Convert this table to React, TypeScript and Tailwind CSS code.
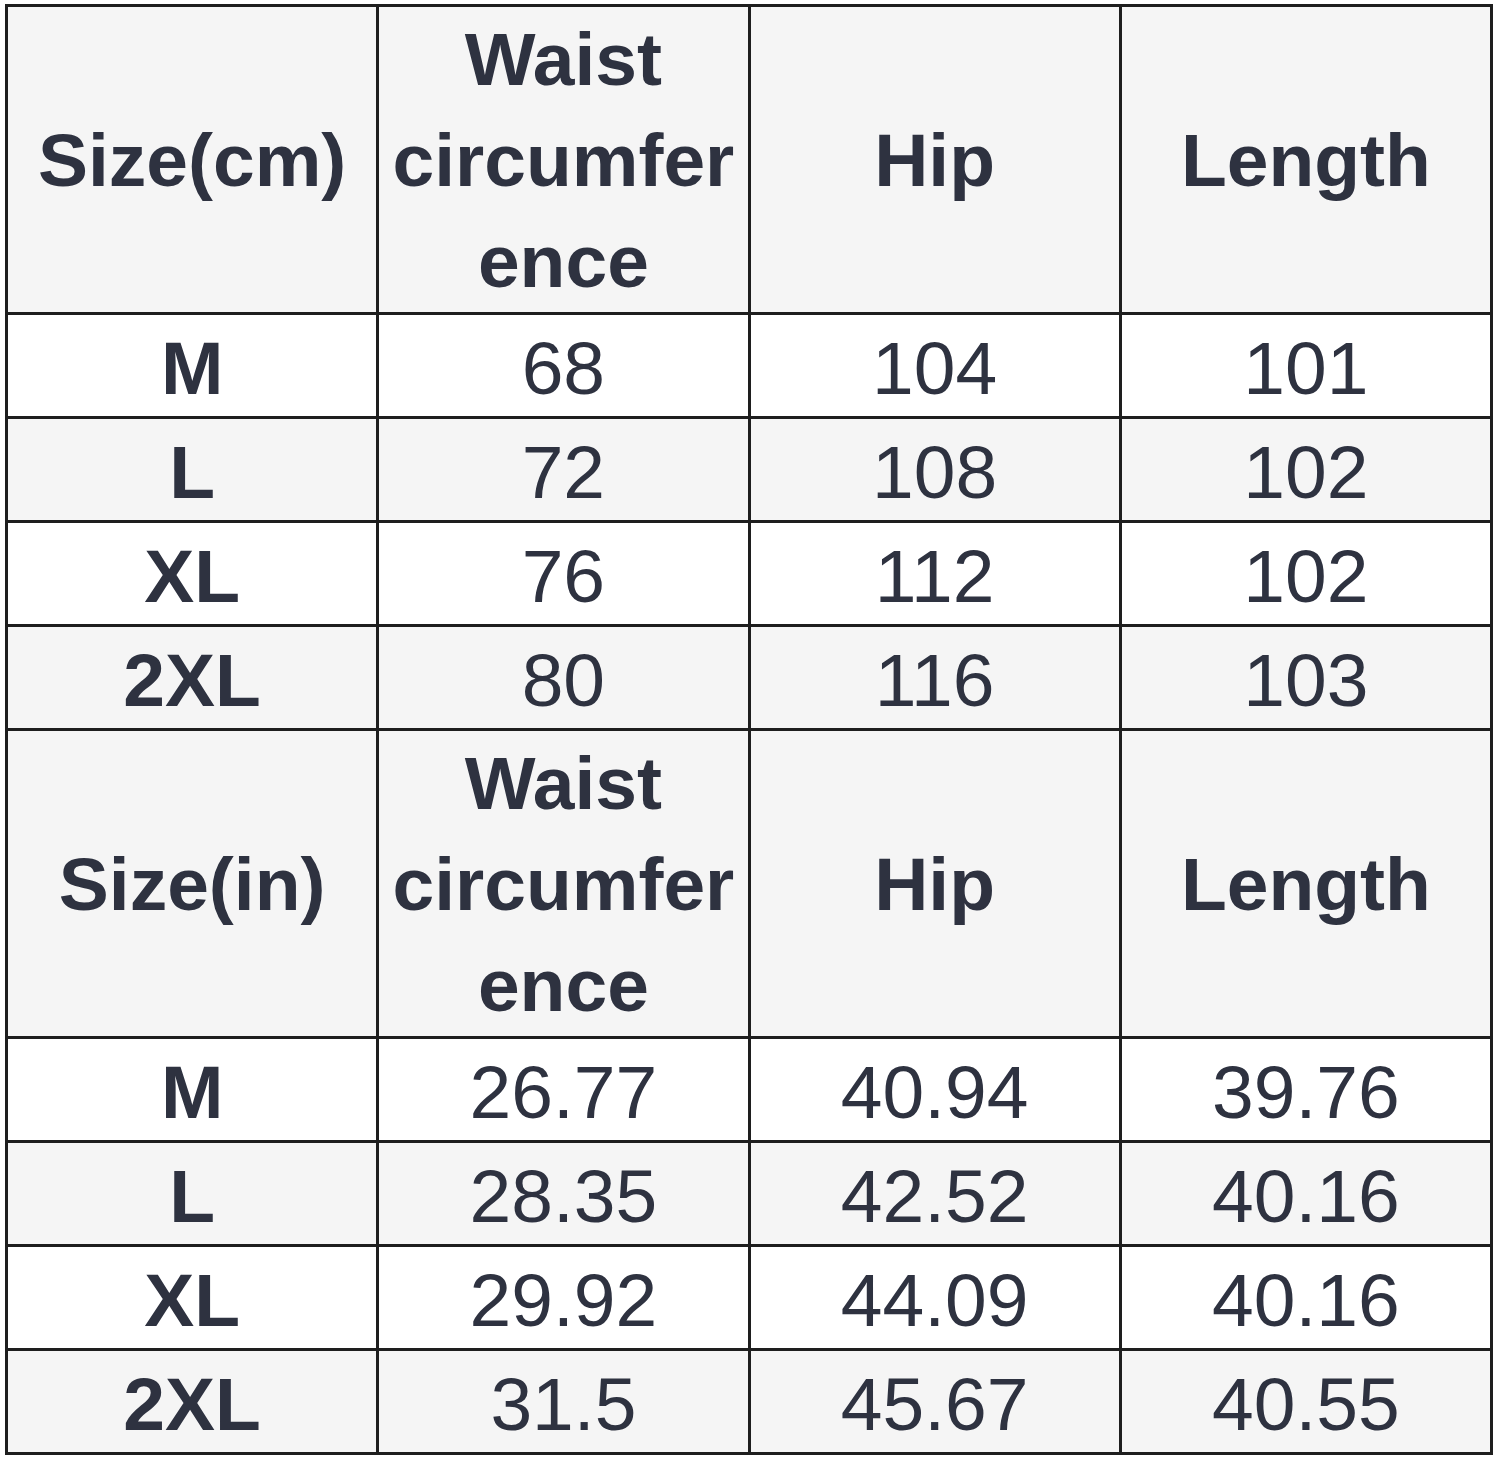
import React from 'react';

type Section = {
  unit: string;
  rows: [string, string, string, string][];
};

const sections: Section[] = [
  {
    unit: 'Size(cm)',
    rows: [
      ['M', '68', '104', '101'],
      ['L', '72', '108', '102'],
      ['XL', '76', '112', '102'],
      ['2XL', '80', '116', '103'],
    ],
  },
  {
    unit: 'Size(in)',
    rows: [
      ['M', '26.77', '40.94', '39.76'],
      ['L', '28.35', '42.52', '40.16'],
      ['XL', '29.92', '44.09', '40.16'],
      ['2XL', '31.5', '45.67', '40.55'],
    ],
  },
];

function HeaderRow({ unit }: { unit: string }) {
  const cell = 'bg-[#f5f5f5] flex items-center justify-center text-center font-bold leading-[101px] overflow-hidden pt-[2px]';
  return (
    <>
      <div className={cell}>{unit}</div>
      <div className={cell}>
        <div>
          Waist
          <br />
          circumfer
          <br />
          ence
        </div>
      </div>
      <div className={cell}>Hip</div>
      <div className={cell}>Length</div>
    </>
  );
}

export default function App() {
  return (
    <div className="w-[1498px] h-[1459px] bg-white pt-[4px] pl-[5px] overflow-hidden">
      <div
        className="w-[1488px] h-[1451px] bg-[#1e1e1e] p-[3px] grid grid-cols-4 gap-[3px] grid-rows-[305px_101px_101px_101px_101px_305px_101px_101px_101px_101px] text-[75px] leading-none text-[#2e3240]"
        style={{ fontFamily: '"Liberation Sans", Arial, sans-serif' }}
      >
        {sections.map((s) => (
          <React.Fragment key={s.unit}>
            <HeaderRow unit={s.unit} />
            {s.rows.map((r, i) => {
              const bg = i % 2 === 0 ? 'bg-white' : 'bg-[#f5f5f5]';
              return r.map((v, j) => (
                <div
                  key={`${s.unit}-${i}-${j}`}
                  className={`${bg} flex items-center justify-center pt-[6px] ${j === 0 ? 'font-bold' : 'font-normal'}`}
                >
                  {v}
                </div>
              ));
            })}
          </React.Fragment>
        ))}
      </div>
    </div>
  );
}
